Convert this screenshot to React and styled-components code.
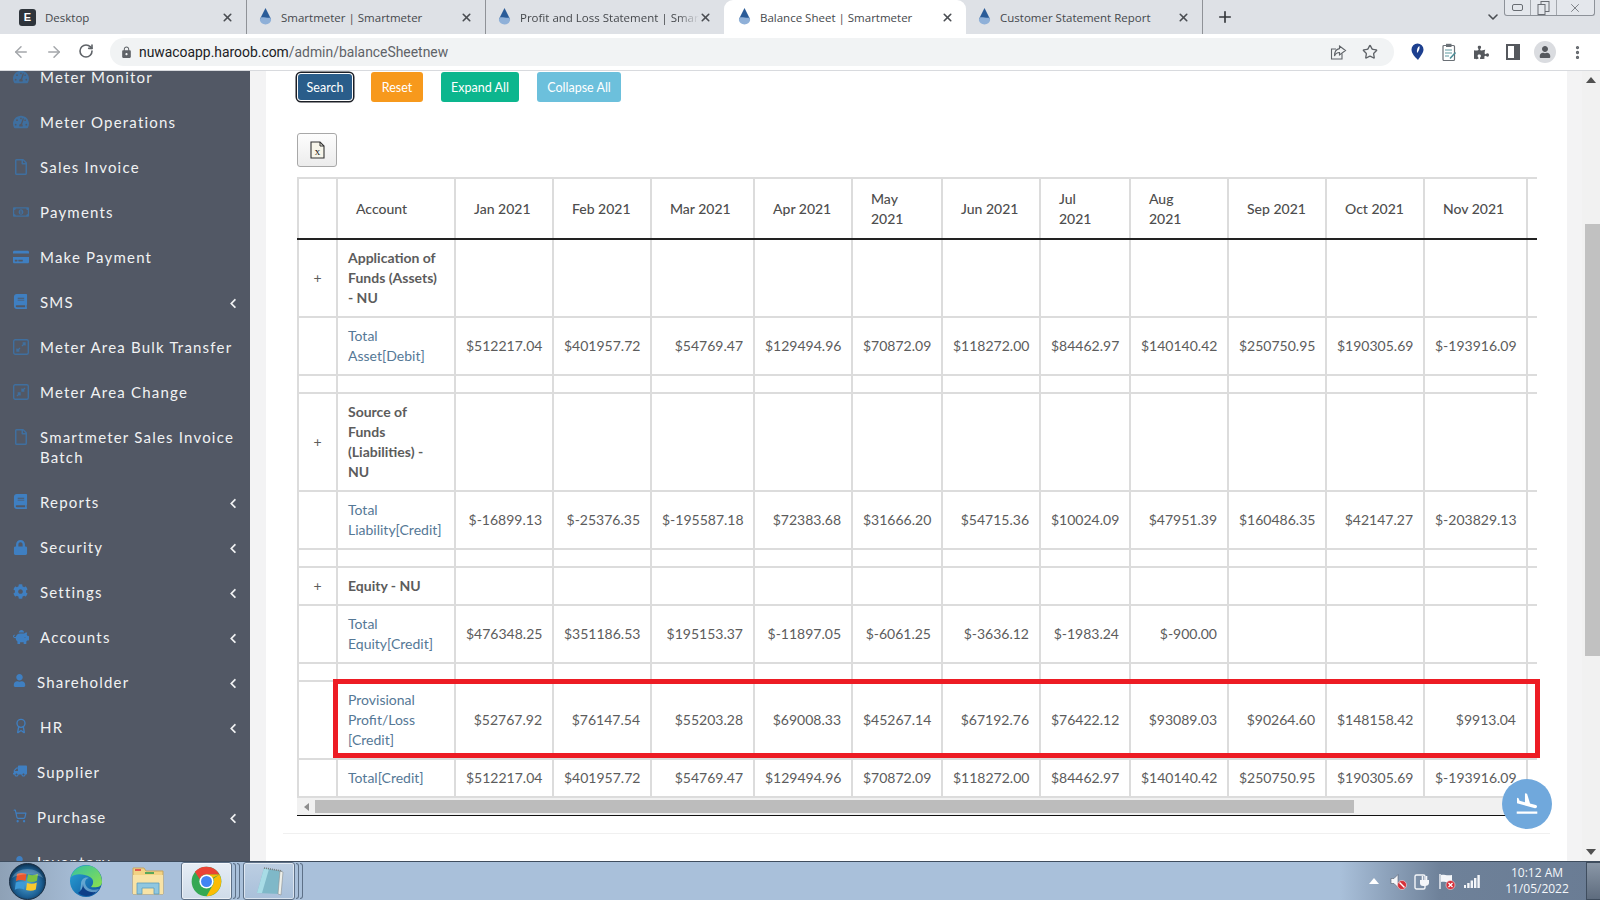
import React from "react";
import styled, { createGlobalStyle } from "styled-components";
import {
  FaBook, FaCog, FaCreditCard, FaLock, FaPiggyBank, FaRegFile, FaRegMoneyBillAlt,
  FaTachometerAlt, FaTruck, FaUser, FaChevronLeft, FaPuzzlePiece, FaStar,
} from "react-icons/fa";
import { LuArrowLeft, LuArrowRight, LuRotateCw, LuAward, LuShoppingCart, LuStar, LuPlus, LuChevronDown, LuX, LuEllipsisVertical } from "react-icons/lu";
import { MdFlightLand, MdLock } from "react-icons/md";

const GlobalStyle = createGlobalStyle`
  html, body { margin: 0; padding: 0; height: 100%; overflow: hidden; }
  body { font-family: "Lato", "Open Sans", sans-serif; }
  * { box-sizing: border-box; }
`;

const Screen = styled.div`
  width: 1600px;
  height: 900px;
  display: flex;
  flex-direction: column;
  overflow: hidden;
  background: #fff;
`;

/* browser chrome */
const TabStrip = styled.div`
  height: 34px;
  flex: none;
  display: flex;
  align-items: stretch;
  padding-left: 8px;
  background: #dee1e6;
  font-family: "Open Sans", sans-serif;
`;

const Tab = styled.div`
  width: ${(p) => p.$w || 239}px;
  display: flex;
  align-items: center;
  padding: 0 10px 0 ${(p) => (p.$active ? 14 : 12)}px;
  color: #45484c;
  font-size: 11.5px;
  position: relative;
  background: ${(p) => (p.$active ? "#fff" : "transparent")};
  border-radius: ${(p) => (p.$active ? "9px 9px 0 0" : "0")};
  border-right: ${(p) => (p.$sep ? "1px solid #8f9297" : "0")};
  background-clip: ${(p) => (p.$sep ? "padding-box" : "border-box")};
`;

const TabTitle = styled.span`
  flex: 1;
  min-width: 0;
  margin-left: 9px;
  white-space: nowrap;
  overflow: hidden;
  ${(p) => p.$fade && "mask-image: linear-gradient(to right, #000 88%, transparent 100%);"}
`;

const DesktopIcon = styled.span`
  width: 17px;
  height: 17px;
  margin-left: -1px;
  border-radius: 3px;
  background: #2e343b;
  color: #fff;
  font-size: 11px;
  font-weight: 600;
  display: flex;
  align-items: center;
  justify-content: center;
  font-family: "Liberation Sans", sans-serif;
`;

const TabClose = styled(LuX)`
  width: 13px;
  height: 13px;
  stroke-width: 3;
  color: #4a4d52;
  margin-right: 2px;
`;

const NewTab = styled.div`
  width: 44px;
  display: flex;
  align-items: center;
  justify-content: center;
  color: #33363a;
`;

const StripSpace = styled.div`
  flex: 1;
`;

const StripChevron = styled.div`
  width: 23px;
  display: flex;
  align-items: center;
  justify-content: center;
  color: #4a4d52;
`;

const WindowControls = styled.div`
  width: 91px;
  height: 16px;
  margin: 0 5px 0 0;
  display: flex;
  border: 1px solid #8d9299;
  border-top: 0;
  border-radius: 0 0 3px 3px;
  background: #e4e7ec;
`;

const WindowCell = styled.div`
  flex: ${(p) => p.$grow || 1};
  display: flex;
  align-items: center;
  justify-content: center;
  border-right: ${(p) => (p.$last ? "0" : "1px solid #a4a8ae")};
  color: #686c72;
`;

const Toolbar = styled.div`
  height: 37px;
  flex: none;
  display: flex;
  align-items: center;
  background: #fff;
  border-bottom: 1px solid #d8dade;
`;

const NavButton = styled.div`
  width: 32.5px;
  display: flex;
  justify-content: center;
  color: ${(p) => (p.$dim ? "#a4a7ab" : "#5f6368")};
`;

const NavGroup = styled.div`
  width: 110px;
  padding-left: 5px;
  display: flex;
`;

const Omnibox = styled.div`
  width: 1284px;
  height: 28px;
  border-radius: 14px;
  background: #f1f3f4;
  display: flex;
  align-items: center;
  padding: 0 8px 0 10px;
`;

const UrlText = styled.div`
  flex: 1;
  margin-left: 6px;
  font-family: "Roboto", sans-serif;
  font-size: 13.9px;
  color: #5f6368;
  span { color: #202124; }
`;

const OmniIcon = styled.div`
  width: 32px;
  display: flex;
  justify-content: center;
  color: #5f6368;
`;

const Extensions = styled.div`
  flex: 1;
  display: flex;
  align-items: center;
  padding-left: 7px;
`;

const ExtIcon = styled.div`
  width: 32px;
  display: flex;
  justify-content: center;
  color: #5f6368;
`;

const Avatar = styled.div`
  width: 22px;
  height: 22px;
  border-radius: 50%;
  background: #dadce0;
  display: flex;
  align-items: center;
  justify-content: center;
  color: #55585d;
`;

/* page */
const Body = styled.div`
  flex: 1;
  min-height: 0;
  display: flex;
`;

const Sidebar = styled.nav`
  width: 250px;
  flex: none;
  background: #525865;
  overflow: hidden;
`;

const MenuList = styled.div`
  margin-top: -16.5px;
`;

const MenuItem = styled.div`
  display: flex;
  align-items: center;
  padding: 12.5px 0 12.5px 13px;
  position: relative;
  color: #f1f2f3;
  font-size: 15px;
  line-height: 20px;
  letter-spacing: 1.2px;
`;

const MenuIcon = styled.span`
  width: ${(p) => (p.$narrow ? 24 : 27)}px;
  flex: none;
  display: flex;
  color: ${(p) => (p.$dim ? "#3f6f9f" : "#3f7fc1")};
  margin-top: ${(p) => (p.$lift ? -p.$lift : 0)}px;
  margin-left: ${(p) => p.$nudge || 0}px;
  font-size: 16px;
`;

const MenuLabel = styled.span`
  width: 196px;
`;

const MenuArrow = styled(FaChevronLeft)`
  position: absolute;
  right: 13px;
  top: 18px;
  width: 8px;
  height: 11px;
  color: #f1f2f3;
`;

const LeftGutter = styled.div`
  width: 16px;
  flex: none;
  background: #f3f3f4;
`;

const Card = styled.main`
  width: 1301px;
  flex: none;
  background: #fff;
  padding: 1px 30px 0 31px;
  overflow: hidden;
`;

const ButtonRow = styled.div`
  display: flex;
  gap: 18px;
  align-items: center;
`;

const Button = styled.button`
  height: 30px;
  padding: 0;
  width: ${(p) => p.$w}px;
  border: 0;
  border-radius: 3px;
  color: #fff;
  background: ${(p) => p.$bg};
  font-family: "Lato", sans-serif;
  font-size: 12.5px;
  ${(p) => p.$focus && "box-shadow: 0 0 0 1px #fff, 0 0 0 2.5px #1c1f26; margin-left: 1px; margin-right: 1px; height: 26px;"}
`;

const ExcelButton = styled.div`
  width: 40px;
  height: 34px;
  margin-top: 31px;
  margin-bottom: 10px;
  border: 1px solid #a8a8a8;
  border-radius: 3px;
  background: linear-gradient(#fdfdfd, #ececec);
  display: flex;
  align-items: center;
  justify-content: center;
`;

const TableArea = styled.div`
  position: relative;
  width: 1240px;
`;

const TableClip = styled.div`
  overflow: hidden;
  border-bottom: 1px solid #111;
`;

const Table = styled.table`
  table-layout: fixed;
  border-collapse: collapse;
  width: 1340px;
  font-size: 14px;
  line-height: 20px;
  color: #5c5c5c;
`;

const Th = styled.th`
  border: 2px solid #dcdcdc;
  border-bottom: 2px solid #222;
  padding: 9.5px 18px;
  text-align: left;
  font-weight: 500;
  color: #4d4d4d;
`;

const Td = styled.td`
  border: 2px solid #dcdcdc;
  padding: 8px 10px;
  vertical-align: middle;
  text-align: ${(p) => p.$align || "right"};
  font-weight: ${(p) => (p.$bold ? 700 : 400)};
  color: ${(p) => (p.$link ? "#557896" : "inherit")};
  word-break: normal;
`;

const FakeScrollbar = styled.div`
  height: 17px;
  display: flex;
  align-items: center;
  background: #f1f1f1;
`;

const ScrollThumb = styled.div`
  width: 1039px;
  height: 13px;
  background: #bcbcbc;
`;

const Triangle = styled.span`
  width: 0;
  height: 0;
  border-style: solid;
  ${(p) => p.$dir === "left" && "border-width: 4px 5px 4px 0; border-color: transparent #8d8d8d transparent transparent;"}
  ${(p) => p.$dir === "up" && "border-width: 0 5px 6px 5px; border-color: transparent transparent #505050 transparent;"}
  ${(p) => p.$dir === "down" && "border-width: 6px 5px 0 5px; border-color: #505050 transparent transparent transparent;"}
`;

const ArrowCell = styled.div`
  width: 18px;
  height: ${(p) => p.$h || 17}px;
  flex: none;
  display: flex;
  align-items: center;
  justify-content: center;
`;

const RedBox = styled.div`
  position: absolute;
  left: 36px;
  top: 502px;
  width: 1207px;
  height: 79px;
  border: 5px solid #ed1c24;
  pointer-events: none;
`;

const Fab = styled.div`
  position: absolute;
  left: 1205px;
  top: 602px;
  width: 50px;
  height: 50px;
  border-radius: 50%;
  background: #70a8dc;
  display: flex;
  align-items: center;
  justify-content: center;
  color: #fff;
`;

const CardRule = styled.div`
  margin: 17px -13px 0 -14px;
  border-top: 1px solid #f0f0f0;
`;

const RightGutter = styled.div`
  width: 15px;
  flex: none;
  background: #f3f3f4;
`;

const PageScroll = styled.div`
  width: 18px;
  flex: none;
  background: #f1f1f1;
  display: flex;
  flex-direction: column;
  align-items: flex-end;
`;

const PageThumb = styled.div`
  width: 15px;
  height: 432px;
  margin-top: 135px;
  margin-bottom: auto;
  background: #c1c1c1;
`;

/* windows taskbar */
const Taskbar = styled.footer`
  height: 39px;
  flex: none;
  display: flex;
  align-items: center;
  border-top: 1px solid #3f4d5e;
  background: linear-gradient(to right, #8ea1b6 0, #a9c0da 90px, #a9c0da 1340px, #6e8199 1440px, #6a7c94 100%);
`;

const StartOrb = styled.div`
  width: 60px;
  display: flex;
  justify-content: center;
  margin-left: -3px;
`;

const TaskSlot = styled.div`
  width: ${(p) => p.$w}px;
  height: 38px;
  flex: none;
  display: flex;
  align-items: center;
  justify-content: center;
  border-radius: 3px;
  ${(p) => p.$open && `
    border: 1px solid #5d7087;
    background: ${p.$active ? "linear-gradient(#e6edf5, #cfdbe9)" : "linear-gradient(#bccee2, #a9c0da)"};
    box-shadow: inset 0 0 0 1px rgba(255,255,255,.55);
  `}
`;

const SlotEdge = styled.div`
  width: 3px;
  height: 36px;
  margin-left: 1px;
  border: 1px solid #5d7087;
  border-left: 0;
  border-radius: 0 3px 3px 0;
`;

const TaskRow = styled.div`
  display: flex;
  align-items: center;
`;

const TrayArea = styled.div`
  margin-left: auto;
  display: flex;
  align-items: center;
  height: 100%;
`;

const TrayIcon = styled.div`
  width: 24.5px;
  display: flex;
  justify-content: center;
  color: #fff;
`;

const Clock = styled.div`
  width: 92px;
  margin-left: 7px;
  text-align: center;
  color: #f4f7fa;
  font-family: "Open Sans", sans-serif;
  font-size: 12px;
  line-height: 16px;
`;

const ShowDesktop = styled.div`
  width: 14px;
  height: 38px;
  margin-left: 3px;
  border: 1px solid #3f4d5e;
  border-right: 0;
  background: linear-gradient(#8a97a7, #5e6c7e);
`;

/* drawings */
const Drop = () => (
  <svg width="13" height="18" viewBox="0 0 13 18">
    <path d="M6.5 0 L12 11 A6 6 0 0 1 1 11 Z" fill="#2b5c98" />
    <path d="M1.6 9.5 C4 8.5 9 10.5 11.4 9.5 L12.2 12 A5.9 5.9 0 0 1 .8 12 Z" fill="#8fb0d8" />
  </svg>
);

const GaugeIcon = () => <FaTachometerAlt size={16} />;

const SquareArrows = ({ flip }) => (
  <svg width="16" height="16" viewBox="0 0 16 16" fill="none" stroke="currentColor" strokeWidth="1.4">
    <rect x=".7" y=".7" width="14.6" height="14.6" rx="1.5" />
    {flip ? (
      <path d="M12 4 L9 7 M9 4.6 V7 H11.4 M7 9 L4 12 M4.6 9 H7 V11.4" />
    ) : (
      <path d="M9 7 L12 4 M9.6 4 H12 V6.4 M7 9 L4 12 M4 9.6 V12 H6.4" />
    )}
  </svg>
);

const ExcelIcon = () => (
  <svg width="15" height="18" viewBox="0 0 15 18">
    <path d="M1 1 H10 L14 5 V17 H1 Z" fill="#f7f5ea" stroke="#333" strokeWidth="1.1" />
    <path d="M10 1 V5 H14" fill="none" stroke="#333" strokeWidth="1" />
    <text x="7.5" y="14" textAnchor="middle" fontSize="11" fontFamily="Liberation Serif, serif" fill="#222">x</text>
  </svg>
);

const ShareIcon = () => (
  <svg width="17" height="17" viewBox="0 0 17 17" fill="none" stroke="currentColor" strokeWidth="1.1">
    <path d="M12 9.5 V15 H1.5 V5 H6" />
    <path d="M9.5 2 L15.5 6.5 L9.5 11 V8.5 C7 8.5 5.5 9.5 4.5 12 C4.5 8 6.5 5 9.5 4.6 Z" />
  </svg>
);

const BalloonIcon = () => (
  <svg width="13" height="18" viewBox="0 0 13 18">
    <path d="M6.5 .5 A6 6 0 0 1 12.5 6.5 C12.5 10 9.5 13 7 17 C4 14 .5 10.5 .5 6.5 A6 6 0 0 1 6.5 .5 Z" fill="#1c3f8f" />
    <path d="M8.5 3 C6.5 4 5.5 7 6 10 C7.5 8.5 9 6 8.5 3 Z" fill="#fff" />
  </svg>
);

const ClipboardIcon = () => (
  <svg width="15" height="19" viewBox="0 0 15 19" fill="none">
    <rect x="1" y="2.5" width="11.5" height="15" rx="1" stroke="#6a7076" strokeWidth="1.2" fill="#fff" />
    <rect x="4" y=".8" width="5.5" height="3.2" fill="#6a7076" />
    <path d="M3 7 H10 M3 10 H10 M3 13 H7" stroke="#5e9aa0" strokeWidth="1.2" />
    <path d="M8 15.5 L13.5 9.5" stroke="#4d8f98" strokeWidth="1.6" />
  </svg>
);

const SidePanelIcon = () => (
  <svg width="14" height="16" viewBox="0 0 14 16">
    <rect x="1" y="1" width="12" height="14" fill="none" stroke="#55585d" strokeWidth="2" />
    <rect x="8" y="1" width="5" height="14" fill="#55585d" />
  </svg>
);

const WindowsOrb = () => (
  <svg width="37" height="37" viewBox="0 0 37 37">
    <defs>
      <radialGradient id="orb" cx="50%" cy="55%" r="55%">
        <stop offset="0" stopColor="#4fa6d8" />
        <stop offset=".7" stopColor="#1c5f93" />
        <stop offset="1" stopColor="#0c2f4d" />
      </radialGradient>
    </defs>
    <circle cx="18.5" cy="18.5" r="18" fill="url(#orb)" stroke="#1c2f44" />
    <path d="M8 11 C11 9.5 14 9.8 17.5 11 L16.5 18 C13.5 16.8 10 16.7 7 18 Z" fill="#e8562c" />
    <path d="M19 11.3 C22.5 12.6 25.5 12.5 29 10.8 L28 17.8 C25 19.3 21.5 19.4 18 18.2 Z" fill="#7cc242" />
    <path d="M6.8 19.5 C10 18.2 13.2 18.3 16.2 19.5 L15.2 26.5 C12 25.2 9 25.2 5.8 26.7 Z" fill="#3d9ad8" />
    <path d="M18 20 C21.3 21 24.7 21 27.8 19.5 L26.8 26.5 C23.8 28 20.5 28 17 27 Z" fill="#f9c82e" />
    <path d="M3 15 C8 3 29 3 34 15 C26 10 11 10 3 15 Z" fill="#fff" opacity=".22" />
  </svg>
);

const EdgeIcon = () => (
  <svg width="34" height="34" viewBox="0 0 34 34">
    <defs>
      <linearGradient id="edgeA" x1="0" y1="0" x2="1" y2="1">
        <stop offset="0" stopColor="#2ba6d9" />
        <stop offset="1" stopColor="#0c4f99" />
      </linearGradient>
      <linearGradient id="edgeB" x1="0" y1="0" x2="1" y2="1">
        <stop offset="0" stopColor="#35c1a0" />
        <stop offset="1" stopColor="#8be04e" />
      </linearGradient>
    </defs>
    <circle cx="17" cy="17" r="16" fill="url(#edgeA)" />
    <path d="M2 13 C5 3 15 0 22 2 C29 4 33 11 33 18 C33 23 27 24 22 23 C25 20 25 15 21 13 C15 9.5 6 9 2 13 Z" fill="url(#edgeB)" />
    <path d="M12 20 C12 15 16 12.5 20 14 C17 14.5 15.5 17 16.5 20.5 C18 25 24 27 30 25 C26 31 17 33 12.5 28 C10.5 25.5 12 23 12 20 Z" fill="#eaf6fb" opacity=".35" />
    <path d="M14 20 C14 25 19 29 27 28 C22 33 14 33 9 29 C12 27 14 24 14 20 Z" fill="#0d3f88" />
  </svg>
);

const FolderIcon = () => (
  <svg width="34" height="30" viewBox="0 0 34 30">
    <path d="M2 2 H13 L15 5 H32 V28 H2 Z" fill="#f2d384" stroke="#c5a560" />
    <rect x="4" y="3" width="6" height="2" fill="#e05a4a" />
    <rect x="14" y="6" width="9" height="2" fill="#58a85a" />
    <path d="M2 9 H32 V28 H2 Z" fill="#f8e3a6" />
    <path d="M6 17 H28 V28 H23 V22 H11 V28 H6 Z" fill="#8fc7e0" stroke="#5c9dbc" strokeWidth=".8" />
  </svg>
);

const ChromeIcon = () => (
  <svg width="31" height="31" viewBox="0 0 48 48">
    <circle cx="24" cy="24" r="23" fill="#34a853" />
    <path d="M24 1 A23 23 0 0 1 44 13 L24 13 A11 11 0 0 0 13.5 20.5 L6 9 A23 23 0 0 1 24 1 Z" fill="#ea4335" />
    <path d="M44 13 A23 23 0 0 1 24 47 L34 29 A11 11 0 0 0 34 18 Z M44 13 H24 L34 20 Z" fill="#fbbc05" />
    <circle cx="24" cy="24" r="11" fill="#fff" />
    <circle cx="24" cy="24" r="8.5" fill="#4285f4" />
  </svg>
);

const NotepadIcon = () => (
  <svg width="32" height="30" viewBox="0 0 32 30">
    <path d="M11 2 L29 5 L27 28 L4 27 Z" fill="#7fb8c8" />
    <path d="M11 2 L16 3 L9 27 L4 27 Z" fill="#a8dce6" />
    <path d="M27 5 L30 6 L28 29 L25 28 Z" fill="#eef0ea" stroke="#8a8f90" strokeWidth=".6" />
    <path d="M11 2 L29 5" stroke="#777" strokeWidth="1.6" strokeDasharray="1 1" />
  </svg>
);

const SpeakerMuted = () => (
  <svg width="17" height="17" viewBox="0 0 17 17">
    <path d="M1 5.5 H4 L8 1.5 V14.5 L4 10.5 H1 Z" fill="#f4f6f9" stroke="#56606e" strokeWidth=".6" />
    <circle cx="12" cy="12" r="4.5" fill="#d5303a" stroke="#fff" strokeWidth=".5" />
    <path d="M9.5 9.5 L14.5 14.5" stroke="#fff" strokeWidth="1.4" />
  </svg>
);

const PlugIcon = () => (
  <svg width="17" height="17" viewBox="0 0 17 17">
    <rect x="1" y="2" width="10" height="14" rx="1.5" fill="none" stroke="#f4f6f9" strokeWidth="1.4" />
    <path d="M6 7 H15 V10 C15 12 13 13 11 13 H9 C7 13 6 12 6 10 Z" fill="#f4f6f9" />
    <path d="M8.5 3 V7 M12.5 3 V7" stroke="#f4f6f9" strokeWidth="1.6" />
  </svg>
);

const FlagIcon = () => (
  <svg width="18" height="17" viewBox="0 0 18 17">
    <path d="M2 1 V16" stroke="#f4f6f9" strokeWidth="1.4" />
    <path d="M3 2 C6 1 8 3 14 2 V9 C9 10 6 8 3 9 Z" fill="#f4f6f9" />
    <circle cx="12.5" cy="12" r="4.5" fill="#d5303a" stroke="#fff" strokeWidth=".5" />
    <path d="M10.5 10 L14.5 14 M14.5 10 L10.5 14" stroke="#fff" strokeWidth="1.3" />
  </svg>
);

const SignalIcon = () => (
  <svg width="16" height="13" viewBox="0 0 16 13" fill="#f4f6f9">
    <rect x="0" y="10" width="2" height="3" />
    <rect x="3.2" y="8" width="2.4" height="5" />
    <rect x="6.6" y="5.5" width="2.4" height="7.5" />
    <rect x="10" y="3" width="2.4" height="10" />
    <rect x="13.4" y="0" width="2.4" height="13" />
  </svg>
);

/* data */
const menu = [
  { label: "Meter Monitor", icon: <GaugeIcon />, dim: true },
  { label: "Meter Operations", icon: <GaugeIcon />, dim: true },
  { label: "Sales Invoice", icon: <FaRegFile size={16} />, dim: true },
  { label: "Payments", icon: <FaRegMoneyBillAlt size={16} />, dim: true },
  { label: "Make Payment", icon: <FaCreditCard size={16} />, lift: 1 },
  { label: "SMS", icon: <FaBook size={15} />, arrow: true, lift: 2 },
  { label: "Meter Area Bulk Transfer", icon: <SquareArrows />, dim: true },
  { label: "Meter Area Change", icon: <SquareArrows flip />, dim: true },
  { label: "Smartmeter Sales Invoice Batch", icon: <FaRegFile size={16} />, dim: true, lift: 20 },
  { label: "Reports", icon: <FaBook size={15} />, arrow: true, lift: 2 },
  { label: "Security", icon: <FaLock size={15} />, arrow: true },
  { label: "Settings", icon: <FaCog size={15} />, arrow: true, lift: 1 },
  { label: "Accounts", icon: <FaPiggyBank size={16} />, arrow: true, lift: 1 },
  { label: "Shareholder", icon: <FaUser size={13} />, arrow: true, narrow: true, lift: 3 },
  { label: "HR", icon: <LuAward size={16} />, arrow: true, lift: 2 },
  { label: "Supplier", icon: <FaTruck size={14} style={{ transform: "scaleX(-1)" }} />, narrow: true, lift: 3 },
  { label: "Purchase", icon: <LuShoppingCart size={14} />, arrow: true, narrow: true, lift: 3 },
  { label: "Inventory", icon: <FaUser size={13} />, narrow: true },
];

const assets = ["512217.04", "401957.72", "54769.47", "129494.96", "70872.09", "118272.00", "84462.97", "140140.42", "250750.95", "190305.69", "-193916.09"];
const liabilities = ["-16899.13", "-25376.35", "-195587.18", "72383.68", "31666.20", "54715.36", "10024.09", "47951.39", "160486.35", "42147.27", "-203829.13"];
const equity = ["476348.25", "351186.53", "195153.37", "-11897.05", "-6061.25", "-3636.12", "-1983.24", "-900.00"];
const provisional = ["52767.92", "76147.54", "55203.28", "69008.33", "45267.14", "67192.76", "76422.12", "93089.03", "90264.60", "148158.42", "9913.04"];

const widths = [39, 118, 98, 98, 103, 98, 90, 98, 90, 98, 98, 98, 103, 110];
const months = [
  "Jan 2021", "Feb 2021", "Mar 2021", "Apr 2021", ["May", "2021"], "Jun 2021",
  ["Jul", "2021"], ["Aug", "2021"], "Sep 2021", "Oct 2021", "Nov 2021", "Dec 2021",
];

const MoneyRow = ({ label, values }) => (
  <tr>
    <Td />
    <Td $align="left" $link>{label}</Td>
    {Array.from({ length: 12 }, (_, i) => (
      <Td key={i}>{values[i] ? `$${values[i]}` : ""}</Td>
    ))}
  </tr>
);

const HeadingRow = ({ children }) => (
  <tr>
    <Td $align="center">+</Td>
    <Td $align="left" $bold>{children}</Td>
    {Array.from({ length: 12 }, (_, i) => <Td key={i} />)}
  </tr>
);

const SpacerRow = () => (
  <tr>
    {widths.map((w) => <Td key={w + Math.random()} />)}
  </tr>
);

const tabs = [
  { title: "Smartmeter | Smartmeter", sep: true },
  { title: "Profit and Loss Statement | Smartmeter", fade: true, w: 238 },
  { title: "Balance Sheet | Smartmeter", active: true, w: 242 },
  { title: "Customer Statement Report", sep: true, w: 237 },
];

export default function App() {
  return (
    <Screen>
      <GlobalStyle />
      <TabStrip>
        <Tab $sep>
          <DesktopIcon>E</DesktopIcon>
          <TabTitle>Desktop</TabTitle>
          <TabClose />
        </Tab>
        {tabs.map((t) => (
          <Tab key={t.title} $sep={t.sep} $active={t.active} $w={t.w}>
            <Drop />
            <TabTitle $fade={t.fade}>{t.title}</TabTitle>
            <TabClose />
          </Tab>
        ))}
        <NewTab><LuPlus size={18} strokeWidth={2.2} /></NewTab>
        <StripSpace />
        <StripChevron><LuChevronDown size={16} strokeWidth={2.4} /></StripChevron>
        <WindowControls>
          <WindowCell>
            <svg width="11" height="7" viewBox="0 0 11 7"><rect x=".5" y=".5" width="10" height="6" rx="1.5" fill="none" stroke="currentColor" /></svg>
          </WindowCell>
          <WindowCell>
            <svg width="13" height="14" viewBox="0 0 13 14" fill="none" stroke="currentColor"><rect x="4" y=".5" width="8" height="10" /><rect x="1" y="3.5" width="7" height="10" fill="#e4e7ec" /></svg>
          </WindowCell>
          <WindowCell $grow={1.5} $last><LuX size={14} strokeWidth={1.4} /></WindowCell>
        </WindowControls>
      </TabStrip>

      <Toolbar>
        <NavGroup>
          <NavButton $dim><LuArrowLeft size={18} /></NavButton>
          <NavButton $dim><LuArrowRight size={18} /></NavButton>
          <NavButton><LuRotateCw size={16} strokeWidth={2.4} /></NavButton>
        </NavGroup>
        <Omnibox>
          <MdLock size={13} color="#5f6368" />
          <UrlText><span>nuwacoapp.haroob.com</span>/admin/balanceSheetnew</UrlText>
          <OmniIcon><ShareIcon /></OmniIcon>
          <OmniIcon><LuStar size={16} strokeWidth={2} /></OmniIcon>
        </Omnibox>
        <Extensions>
          <ExtIcon><BalloonIcon /></ExtIcon>
          <ExtIcon><ClipboardIcon /></ExtIcon>
          <ExtIcon><FaPuzzlePiece size={15} color="#55585d" /></ExtIcon>
          <ExtIcon><SidePanelIcon /></ExtIcon>
          <ExtIcon><Avatar><FaUser size={12} /></Avatar></ExtIcon>
          <ExtIcon><LuEllipsisVertical size={17} strokeWidth={2.6} /></ExtIcon>
        </Extensions>
      </Toolbar>

      <Body>
        <Sidebar>
          <MenuList>
            {menu.map((m) => (
              <MenuItem key={m.label}>
                <MenuIcon $dim={m.dim} $narrow={m.narrow} $lift={m.lift}>{m.icon}</MenuIcon>
                <MenuLabel>{m.label}</MenuLabel>
                {m.arrow && <MenuArrow />}
              </MenuItem>
            ))}
          </MenuList>
        </Sidebar>
        <LeftGutter />
        <Card>
          <ButtonRow>
            <Button $w={54} $bg="#2a5d8a" $focus>Search</Button>
            <Button $w={52} $bg="#f7991c">Reset</Button>
            <Button $w={78} $bg="#0cb68e">Expand All</Button>
            <Button $w={84} $bg="#6cc0dc">Collapse All</Button>
          </ButtonRow>
          <ExcelButton><ExcelIcon /></ExcelButton>
          <TableArea>
            <TableClip>
              <Table>
                <colgroup>
                  {widths.map((w, i) => <col key={i} style={{ width: w }} />)}
                </colgroup>
                <thead>
                  <tr>
                    <Th />
                    <Th>Account</Th>
                    {months.map((m) => (
                      <Th key={m}>{Array.isArray(m) ? <>{m[0]}<br />{m[1]}</> : m}</Th>
                    ))}
                  </tr>
                </thead>
                <tbody>
                  <HeadingRow>Application of Funds (Assets) - NU</HeadingRow>
                  <MoneyRow label={<>Total<br />Asset[Debit]</>} values={assets} />
                  <SpacerRow />
                  <HeadingRow>Source of Funds (Liabilities) - NU</HeadingRow>
                  <MoneyRow label={<>Total<br />Liability[Credit]</>} values={liabilities} />
                  <SpacerRow />
                  <HeadingRow>Equity - NU</HeadingRow>
                  <MoneyRow label={<>Total<br />Equity[Credit]</>} values={equity} />
                  <SpacerRow />
                  <MoneyRow label={<>Provisional<br />Profit/Loss<br />[Credit]</>} values={provisional} />
                  <MoneyRow label="Total[Credit]" values={assets} />
                </tbody>
              </Table>
              <FakeScrollbar>
                <ArrowCell><Triangle $dir="left" /></ArrowCell>
                <ScrollThumb />
              </FakeScrollbar>
            </TableClip>
            <RedBox />
            <Fab><MdFlightLand size={26} /></Fab>
          </TableArea>
          <CardRule />
        </Card>
        <RightGutter />
        <PageScroll>
          <ArrowCell $h={18}><Triangle $dir="up" /></ArrowCell>
          <PageThumb />
          <ArrowCell $h={18}><Triangle $dir="down" /></ArrowCell>
        </PageScroll>
      </Body>

      <Taskbar>
        <StartOrb><WindowsOrb /></StartOrb>
        <TaskRow>
          <TaskSlot $w={58}><EdgeIcon /></TaskSlot>
          <TaskSlot $w={66}><FolderIcon /></TaskSlot>
          <TaskSlot $w={51} $open $active><ChromeIcon /></TaskSlot>
          <SlotEdge />
          <SlotEdge />
          <TaskSlot $w={52} $open style={{ marginLeft: 3 }}><NotepadIcon /></TaskSlot>
          <SlotEdge />
          <SlotEdge />
        </TaskRow>
        <TrayArea>
          <TrayIcon><Triangle $dir="up" style={{ borderBottomColor: "#fff" }} /></TrayIcon>
          <TrayIcon><SpeakerMuted /></TrayIcon>
          <TrayIcon><PlugIcon /></TrayIcon>
          <TrayIcon><FlagIcon /></TrayIcon>
          <TrayIcon><SignalIcon /></TrayIcon>
          <Clock>10:12 AM<br />11/05/2022</Clock>
          <ShowDesktop />
        </TrayArea>
      </Taskbar>
    </Screen>
  );
}
